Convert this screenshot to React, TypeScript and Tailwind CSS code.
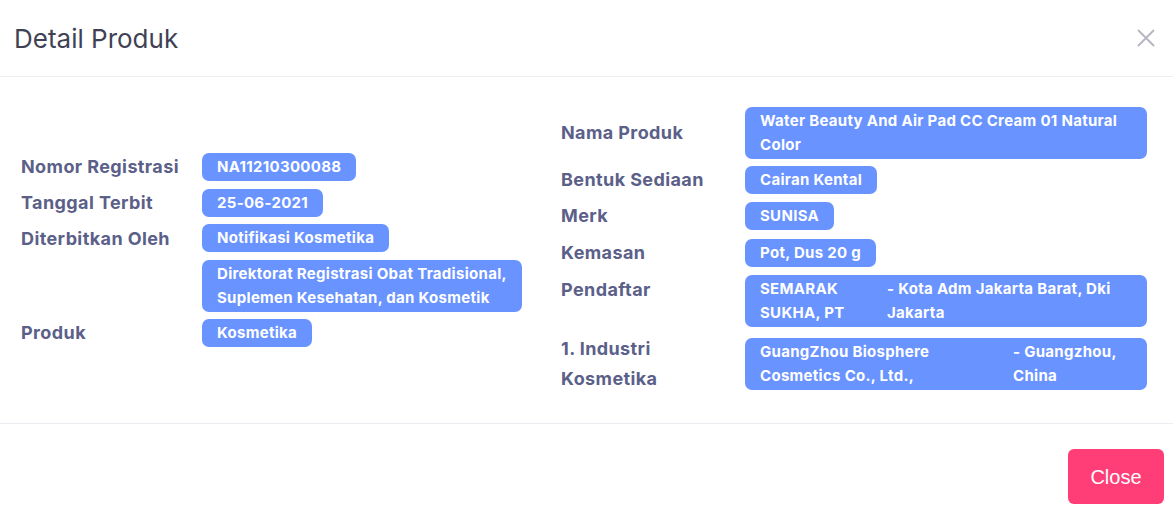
import React from "react";

const Badge = ({ children, className = "" }: { children: React.ReactNode; className?: string }) => (
  <div
    className={`rounded-[7px] bg-[#6993ff] px-[15px] py-[2px] text-[15px] leading-[24px] font-bold tracking-[0.3px] text-white ${className}`}
  >
    {children}
  </div>
);

const Row = ({
  label,
  labelWidth,
  align = "items-center",
  className = "",
  children,
}: {
  label: React.ReactNode;
  labelWidth: string;
  align?: string;
  className?: string;
  children: React.ReactNode;
}) => (
  <div className={`flex ${align} ${className}`}>
    <div className={`${labelWidth} shrink-0 text-[18px] leading-[30px] font-bold tracking-[0.4px] text-[#5b6089]`}>{label}</div>
    <div className="flex min-w-0 flex-1 flex-col items-start gap-[8px]">{children}</div>
  </div>
);

export default function App() {
  return (
    <div className="h-[517px] w-[1173px] bg-white font-['Inter',sans-serif]">
      <div className="flex h-[77px] items-center justify-between border-b border-[#ebedf3] pl-[14px] pr-[18px]">
        <h2 className="text-[26px] font-normal text-[#3f4254]">Detail Produk</h2>
        <svg width="18" height="18" viewBox="0 0 18 18" className="text-[#b5b5c3]">
          <path d="M1.5 1.5 L16.5 16.5 M16.5 1.5 L1.5 16.5" stroke="currentColor" strokeWidth="1.8" strokeLinecap="round" />
        </svg>
      </div>

      <div className="flex h-[347px] items-center gap-[22px] border-b border-[#ebedf3] pl-[21px] pr-[26px]">
        <div className="flex w-[518px] flex-col gap-[6px]">
          <Row label="Nomor Registrasi" labelWidth="w-[181px]">
            <Badge>NA11210300088</Badge>
          </Row>
          <Row label="Tanggal Terbit" labelWidth="w-[181px]">
            <Badge>25-06-2021</Badge>
          </Row>
          <Row label="Diterbitkan Oleh" labelWidth="w-[181px]" align="items-start">
            <Badge>Notifikasi Kosmetika</Badge>
            <Badge>
              Direktorat Registrasi Obat Tradisional,
              <br />
              Suplemen Kesehatan, dan Kosmetik
            </Badge>
          </Row>
          <Row label="Produk" labelWidth="w-[181px]">
            <Badge>Kosmetika</Badge>
          </Row>
        </div>

        <div className="flex flex-1 flex-col gap-[6px]">
          <Row label="Nama Produk" labelWidth="w-[184px]">
            <Badge className="w-full">
              Water Beauty And Air Pad CC Cream 01 Natural
              <br />
              Color
            </Badge>
          </Row>
          <Row label="Bentuk Sediaan" labelWidth="w-[184px]">
            <Badge>Cairan Kental</Badge>
          </Row>
          <Row label="Merk" labelWidth="w-[184px]">
            <Badge>SUNISA</Badge>
          </Row>
          <Row label="Kemasan" labelWidth="w-[184px]" className="mt-[1px]">
            <Badge>Pot, Dus 20 g</Badge>
          </Row>
          <Row label="Pendaftar" labelWidth="w-[184px]" align="items-start" className="mt-[1px]">
            <Badge className="flex w-full">
              <span className="w-[127px] shrink-0">
                SEMARAK
                <br />
                SUKHA, PT
              </span>
              <span>
                - Kota Adm Jakarta Barat, Dki
                <br />
                Jakarta
              </span>
            </Badge>
          </Row>
          <Row
            label={
              <>
                1. Industri
                <br />
                Kosmetika
              </>
            }
            labelWidth="w-[184px]"
            className="mt-[1px]"
          >
            <Badge className="flex w-full">
              <span className="w-[253px] shrink-0">
                GuangZhou Biosphere
                <br />
                Cosmetics Co., Ltd.,
              </span>
              <span>
                - Guangzhou,
                <br />
                China
              </span>
            </Badge>
          </Row>
        </div>
      </div>

      <div className="flex justify-end pr-[9px] pt-[25px]">
        <button className="h-[55px] w-[96px] rounded-[6px] bg-[#ff3d77] font-['Liberation_Sans',sans-serif] text-[20px] text-white">
          Close
        </button>
      </div>
    </div>
  );
}
